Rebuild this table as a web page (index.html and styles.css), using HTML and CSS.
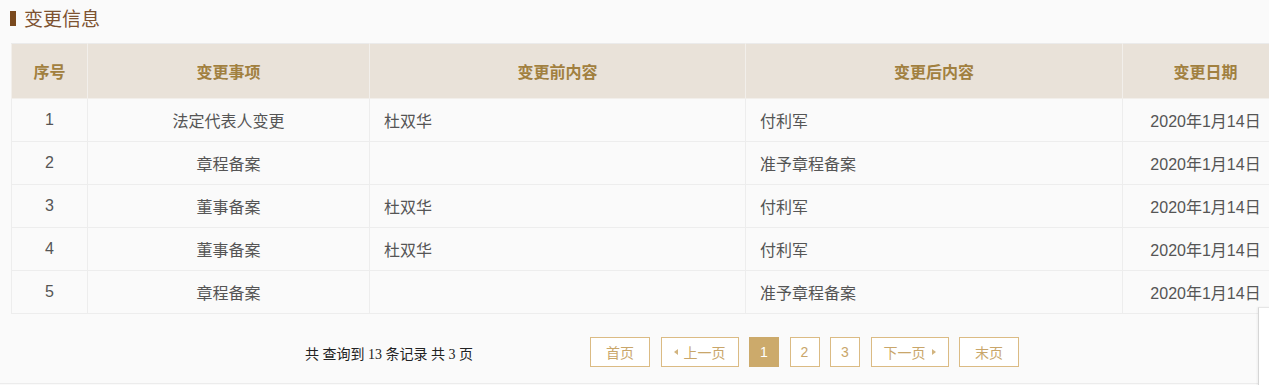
FILE: index.html
```html
<!DOCTYPE html>
<html lang="zh">
<head>
<meta charset="utf-8">
<title>变更信息</title>
<link rel="stylesheet" href="styles.css">
</head>
<body>
<div class="page">
  <h2 class="title"><span class="title-bar"></span>变更信息</h2>
  <table class="grid">
    <colgroup>
      <col class="c0"><col class="c1"><col class="c2"><col class="c3"><col class="c4">
    </colgroup>
    <thead>
      <tr><th>序号</th><th>变更事项</th><th>变更前内容</th><th>变更后内容</th><th>变更日期</th></tr>
    </thead>
    <tbody>
      <tr><td class="center">1</td><td class="center">法定代表人变更</td><td class="left">杜双华</td><td class="left">付利军</td><td class="center">2020年1月14日</td></tr>
      <tr><td class="center">2</td><td class="center">章程备案</td><td class="left"></td><td class="left">准予章程备案</td><td class="center">2020年1月14日</td></tr>
      <tr><td class="center">3</td><td class="center">董事备案</td><td class="left">杜双华</td><td class="left">付利军</td><td class="center">2020年1月14日</td></tr>
      <tr><td class="center">4</td><td class="center">董事备案</td><td class="left">杜双华</td><td class="left">付利军</td><td class="center">2020年1月14日</td></tr>
      <tr><td class="center">5</td><td class="center">章程备案</td><td class="left"></td><td class="left">准予章程备案</td><td class="center">2020年1月14日</td></tr>
    </tbody>
  </table>
  <div class="pager">
    <div class="pager-info">共 查询到 13 条记录 共 3 页</div>
    <div class="pager-btns">
      <a class="btn btn-wide">首页</a>
      <a class="btn btn-nav"><span class="tri tri-left"></span>上一页</a>
      <a class="btn btn-num active">1</a>
      <a class="btn btn-num">2</a>
      <a class="btn btn-num">3</a>
      <a class="btn btn-nav">下一页<span class="tri tri-right"></span></a>
      <a class="btn btn-wide">末页</a>
    </div>
  </div>
</div>
<div class="float-box"></div>
</body>
</html>
```

FILE: styles.css
```css
html, body {
  margin: 0;
  padding: 0;
  background: #fafafa;
  overflow: hidden;
}
body {
  font-family: "Liberation Sans", "Noto Sans CJK SC", sans-serif;
  width: 1269px;
  height: 385px;
  position: relative;
}
.page {
  padding: 7px 0 0 11px;
  width: 1290px;
  border-bottom: 1px solid #ececec;
  height: 384px;
  box-sizing: border-box;
}
.title {
  margin: 0 0 0 -1px;
  height: 22px;
  display: flex;
  align-items: center;
  font-size: 19px;
  font-weight: normal;
  color: #7d5230;
  font-family: "Noto Sans CJK SC", sans-serif;
  line-height: 22px;
}
.title-bar {
  display: inline-block;
  width: 6px;
  height: 15px;
  background: #7a4a1e;
  margin-right: 8px;
}
.grid {
  margin-top: 14px;
  border-collapse: collapse;
  table-layout: fixed;
  width: 1277px;
  border: 1px solid #ebebeb;
}
.c0 { width: 76px; }
.c1 { width: 282px; }
.c2 { width: 376px; }
.c3 { width: 377px; }
.c4 { width: 166px; }
.grid th {
  height: 54px;
  background: #e9e2d9;
  color: #a1803f;
  font-size: 16px;
  font-weight: bold;
  font-family: "Noto Sans CJK SC", sans-serif;
  border: 1px solid #f2efeb;
  border-top-color: #ebebeb;
  padding: 0;
  text-align: center;
}
.grid td {
  height: 42px;
  font-size: 16px;
  color: #555;
  border: 1px solid #ededed;
  padding: 0;
  background: #fafafa;
}
.grid td.center { text-align: center; }
.grid td.left { text-align: left; padding-left: 14px; }
.pager {
  display: flex;
  align-items: center;
  margin-top: 22px;
  height: 31px;
}
.pager-info {
  font-family: "Liberation Serif", "Noto Sans CJK SC", serif;
  font-size: 14px;
  color: #222;
  margin-left: 294px;
  width: 285px;
  padding-top: 2px;
}
.pager-btns {
  display: flex;
  gap: 10.5px;
}
.btn {
  display: flex;
  align-items: center;
  justify-content: center;
  height: 30px;
  box-sizing: border-box;
  border: 1px solid #dbbb84;
  color: #c9a66a;
  font-size: 14px;
  font-family: "Noto Sans CJK SC", sans-serif;
  background: #fff;
}
.btn-wide { width: 60px; }
.btn-nav { width: 78px; gap: 4px; }
.btn-num { width: 30px; font-family: "Liberation Sans", sans-serif; }
.btn.active {
  background: #ccaa6b;
  border-color: #ccaa6b;
  color: #fff;
}
.tri {
  display: inline-block;
  width: 0;
  height: 0;
  border-top: 3px solid transparent;
  border-bottom: 3px solid transparent;
}
.tri-left { border-right: 4px solid #d2b47f; margin-right: 2px; }
.tri-right { border-left: 4px solid #d2b47f; margin-left: 2px; }
.float-box {
  position: absolute;
  left: 1258px;
  top: 307px;
  width: 20px;
  height: 90px;
  background: #fff;
  border-left: 1px solid #d6d6d6;
  border-top: 1px solid #e6e6e6;
  box-shadow: -1px 0 2px rgba(0,0,0,0.05);
}
```
